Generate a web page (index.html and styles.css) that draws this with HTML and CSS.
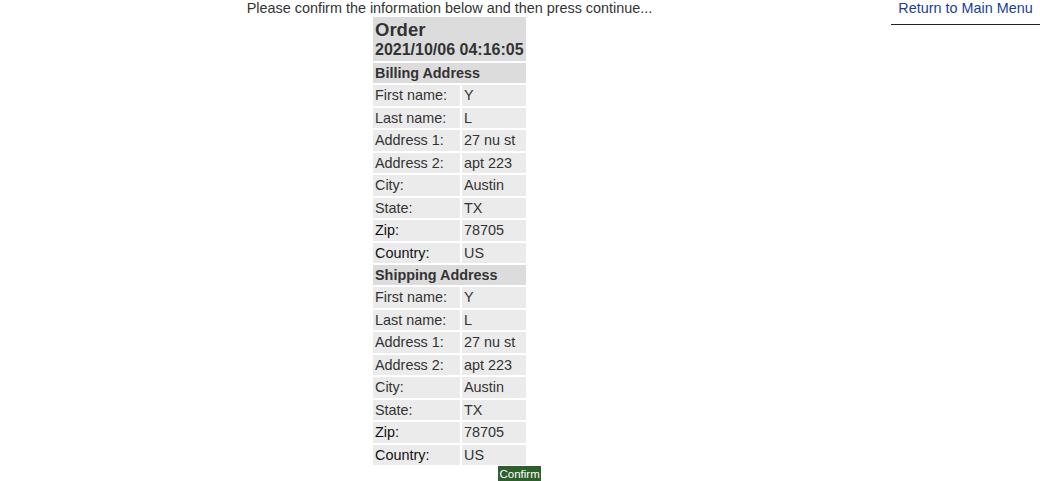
FILE: index.html
```html
<!DOCTYPE html>
<html>
<head>
<meta charset="utf-8">
<link rel="stylesheet" href="styles.css">
</head>
<body>
<div class="page">
  <main class="main">
    <p class="intro">Please confirm the information below and then press continue...</p>
    <div class="form">
      <table class="order">
        <colgroup><col class="c-lbl"><col class="c-val"></colgroup>
        <tr><th colspan="2" class="title"><div class="t1">Order</div><div class="t2">2021/10/06 04:16:05</div></th></tr>
        <tr><th colspan="2" class="sect">Billing Address</th></tr>
        <tr><td class="lbl">First name:</td><td class="val">Y</td></tr>
        <tr><td class="lbl">Last name:</td><td class="val">L</td></tr>
        <tr><td class="lbl">Address 1:</td><td class="val">27 nu st</td></tr>
        <tr><td class="lbl">Address 2:</td><td class="val">apt 223</td></tr>
        <tr><td class="lbl">City:</td><td class="val">Austin</td></tr>
        <tr><td class="lbl">State:</td><td class="val">TX</td></tr>
        <tr><td class="lbl strong">Zip:</td><td class="val">78705</td></tr>
        <tr><td class="lbl strong">Country:</td><td class="val">US</td></tr>
        <tr><th colspan="2" class="sect">Shipping Address</th></tr>
        <tr><td class="lbl">First name:</td><td class="val">Y</td></tr>
        <tr><td class="lbl">Last name:</td><td class="val">L</td></tr>
        <tr><td class="lbl">Address 1:</td><td class="val">27 nu st</td></tr>
        <tr><td class="lbl">Address 2:</td><td class="val">apt 223</td></tr>
        <tr><td class="lbl">City:</td><td class="val">Austin</td></tr>
        <tr><td class="lbl">State:</td><td class="val">TX</td></tr>
        <tr><td class="lbl strong">Zip:</td><td class="val">78705</td></tr>
        <tr><td class="lbl strong">Country:</td><td class="val">US</td></tr>
      </table>
      <div class="actions"><button class="confirm" type="button">Confirm</button></div>
    </div>
  </main>
  <aside class="side">
    <a class="menu" href="#">Return to Main Menu</a>
  </aside>
</div>
</body>
</html>
```
FILE: styles.css
```css
html, body {
  margin: 0;
  padding: 0;
  background: #fff;
}
body {
  font-family: "Liberation Sans", Arial, Helvetica, sans-serif;
  font-size: 14.4px;
  color: #333;
}
.page {
  display: flex;
  align-items: flex-start;
}
.main {
  flex: 1;
  margin-left: 8px;
  display: flex;
  flex-direction: column;
  align-items: center;
}
.intro {
  margin: 0;
  line-height: 16px;
  text-align: center;
}
.form {
  margin-top: -1px;
  width: 157px;
}
.order {
  border-spacing: 2px;
  width: 157px;
  table-layout: fixed;
}
.c-lbl {
  width: 87px;
}
.c-val {
  width: 64px;
}
.order th, .order td {
  padding: 2px 2px;
  line-height: 16.5px;
  text-align: left;
  vertical-align: middle;
}
.order .title {
  background: #dcdcdc;
  padding: 3px 2px 2px 2px;
}
.t1 {
  font-size: 18.5px;
  font-weight: bold;
  line-height: 20px;
}
.t2 {
  font-size: 16px;
  font-weight: bold;
  line-height: 19px;
}
.order .sect {
  background: #dcdcdc;
  font-weight: bold;
  padding: 2px;
  line-height: 16px;
}
.lbl {
  background: #ebebeb;
}
.val {
  background: #ebebeb;
}
.strong {
  color: #111;
}
.actions {
  margin-top: -1px;
  padding-left: 127px;
}
.confirm {
  display: block;
  border: none;
  margin: 0;
  padding: 1px 1.5px 2px;
  background: #2e5e2c;
  color: #fff;
  font-family: "Liberation Sans", Arial, sans-serif;
  font-size: 11.5px;
  line-height: 14px;
  white-space: nowrap;
}
.side {
  width: 149px;
  flex: none;
  text-align: center;
  border-bottom: 1px solid #222;
  padding-bottom: 8px;
}
.menu {
  color: #1a3e9a;
  text-decoration: none;
  line-height: 16px;
  display: inline-block;
}
```
